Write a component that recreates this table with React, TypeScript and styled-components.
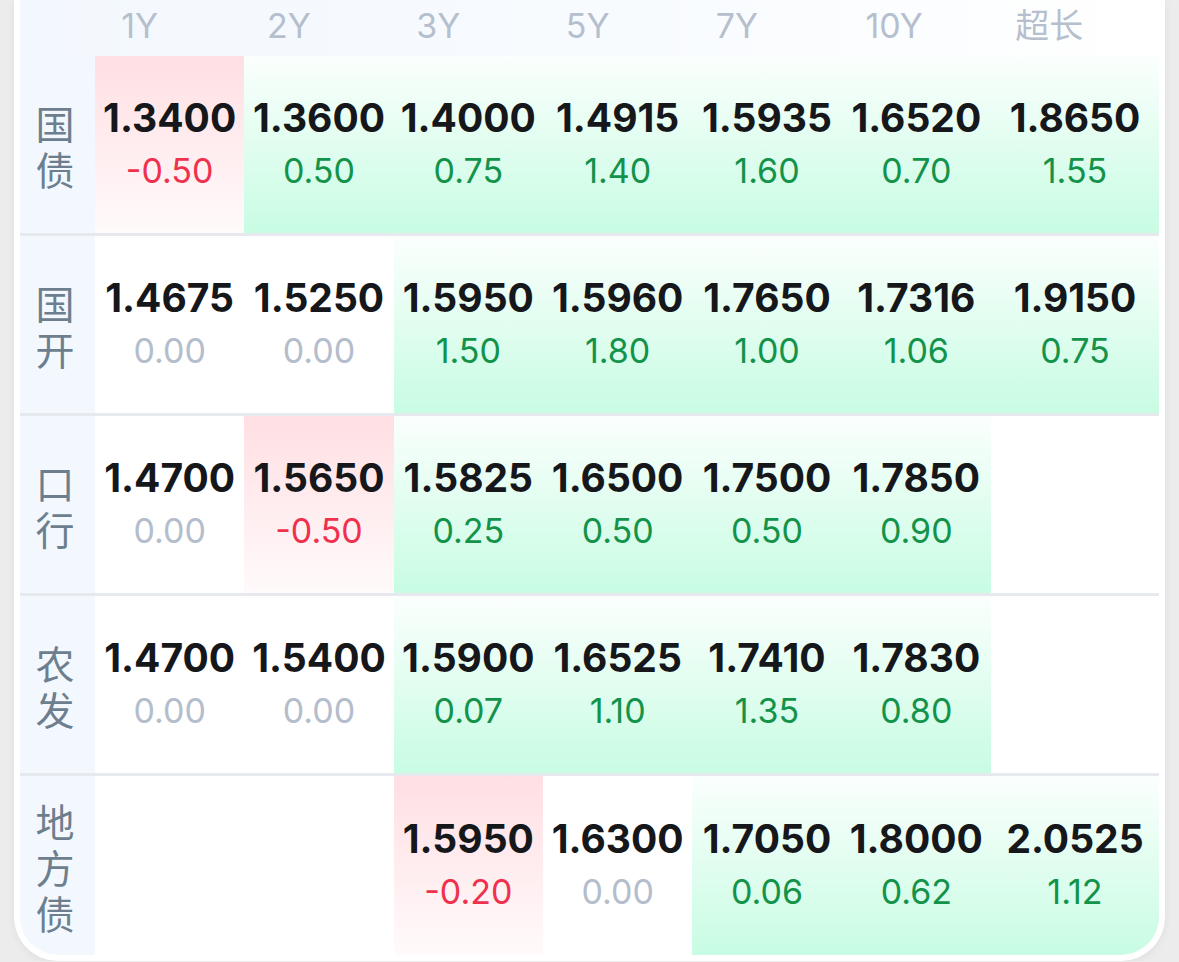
import React from "react";
import styled, { createGlobalStyle, css } from "styled-components";

type Quote = { yld: string; chg: string } | null;
type Tone = "up" | "down" | "flat" | "none";

const tenors = ["1Y", "2Y", "3Y", "5Y", "7Y", "10Y", "超长"];

const q = (yld: string, chg: string): Quote => ({ yld, chg });

const rows: { name: string; cells: Quote[] }[] = [
  {
    name: "国债",
    cells: [
      q("1.3400", "-0.50"),
      q("1.3600", "0.50"),
      q("1.4000", "0.75"),
      q("1.4915", "1.40"),
      q("1.5935", "1.60"),
      q("1.6520", "0.70"),
      q("1.8650", "1.55"),
    ],
  },
  {
    name: "国开",
    cells: [
      q("1.4675", "0.00"),
      q("1.5250", "0.00"),
      q("1.5950", "1.50"),
      q("1.5960", "1.80"),
      q("1.7650", "1.00"),
      q("1.7316", "1.06"),
      q("1.9150", "0.75"),
    ],
  },
  {
    name: "口行",
    cells: [
      q("1.4700", "0.00"),
      q("1.5650", "-0.50"),
      q("1.5825", "0.25"),
      q("1.6500", "0.50"),
      q("1.7500", "0.50"),
      q("1.7850", "0.90"),
      null,
    ],
  },
  {
    name: "农发",
    cells: [
      q("1.4700", "0.00"),
      q("1.5400", "0.00"),
      q("1.5900", "0.07"),
      q("1.6525", "1.10"),
      q("1.7410", "1.35"),
      q("1.7830", "0.80"),
      null,
    ],
  },
  {
    name: "地方债",
    cells: [
      null,
      null,
      q("1.5950", "-0.20"),
      q("1.6300", "0.00"),
      q("1.7050", "0.06"),
      q("1.8000", "0.62"),
      q("2.0525", "1.12"),
    ],
  },
];

const toneOf = (c: Quote): Tone => {
  if (!c) return "none";
  const v = parseFloat(c.chg);
  if (v < 0) return "down";
  if (v > 0) return "up";
  return "flat";
};

const App = () => {
  return (
    <>
      <GlobalStyle />
      <Card>
        <Table>
          <HeaderRow>
            <span />
            {tenors.map((t) => (
              <HeaderCell key={t}>{t}</HeaderCell>
            ))}
          </HeaderRow>
          {rows.map((row) => (
            <Row key={row.name}>
              <Label>
                <LabelText>{row.name}</LabelText>
              </Label>
              {row.cells.map((cell, i) => {
                const tone = toneOf(cell);
                return (
                  <Cell key={i} tone={tone}>
                    {cell && (
                      <>
                        <Yield>{cell.yld}</Yield>
                        <Change tone={tone}>{cell.chg}</Change>
                      </>
                    )}
                  </Cell>
                );
              })}
            </Row>
          ))}
        </Table>
      </Card>
    </>
  );
};

export default App;

const GlobalStyle = createGlobalStyle`
  body {
    margin: 0;
    background: #ececec;
    font-family: Inter, "Noto Sans CJK SC", sans-serif;
  }
`;

const Card = styled.div`
  margin-left: 14px;
  width: 1151px;
  box-sizing: border-box;
  padding: 0 6px 6px;
  background: #fff;
  border-radius: 0 0 44px 44px;
  box-shadow: 0 2px 8px rgba(0, 0, 0, 0.06);
`;

const Table = styled.div`
  overflow: hidden;
  border-radius: 0 0 38px 38px;
`;

// header labels sit a little left of the value columns
const HeaderRow = styled.div`
  display: grid;
  grid-template-columns: 45px repeat(5, 149.33px) 165px 145px;
  height: 56px;
  align-items: center;
  padding-bottom: 4px;
  box-sizing: border-box;
  background: linear-gradient(90deg, #f3f8fe 0%, #f8fbfe 55%, #ffffff 100%);
`;

const HeaderCell = styled.div`
  text-align: center;
  font-size: 34px;
  line-height: 40px;
  color: #b6bfcd;
`;

const Row = styled.div`
  display: grid;
  grid-template-columns: 75px repeat(6, 149.33px) 1fr;
  height: 177px;
  border-top: 3px solid #e6eaef;
  &:nth-child(2) {
    border-top: none;
  }
  &:last-child {
    height: 179px;
  }
`;

const Label = styled.div`
  display: flex;
  align-items: center;
  justify-content: center;
  background: #f3f8fe;
  padding-right: 5px;
`;

const LabelText = styled.div`
  width: 40px;
  word-break: break-all;
  text-align: center;
  font-family: "Noto Sans CJK SC", sans-serif;
  font-size: 39px;
  line-height: 46px;
  color: #6d7f8e;
`;

const toneBg = {
  up: css`
    background: linear-gradient(180deg, #fbfffd 0%, #c8fce3 100%);
  `,
  down: css`
    background: linear-gradient(180deg, #ffdfe3 0%, #fffafb 100%);
  `,
  flat: css`
    background: #fff;
  `,
  none: css`
    background: #fff;
  `,
};

const Cell = styled.div<{ tone: Tone }>`
  display: flex;
  flex-direction: column;
  align-items: center;
  justify-content: center;
  ${(p) => toneBg[p.tone]}
`;

const Yield = styled.div`
  font-size: 39px;
  font-weight: 700;
  line-height: 50px;
  color: #16171a;
`;

const changeColor = {
  up: "#13934a",
  down: "#f0304c",
  flat: "#b4bdcb",
  none: "#b4bdcb",
};

const Change = styled.div<{ tone: Tone }>`
  margin-top: 3px;
  font-size: 34px;
  line-height: 50px;
  color: ${(p) => changeColor[p.tone]};
`;
